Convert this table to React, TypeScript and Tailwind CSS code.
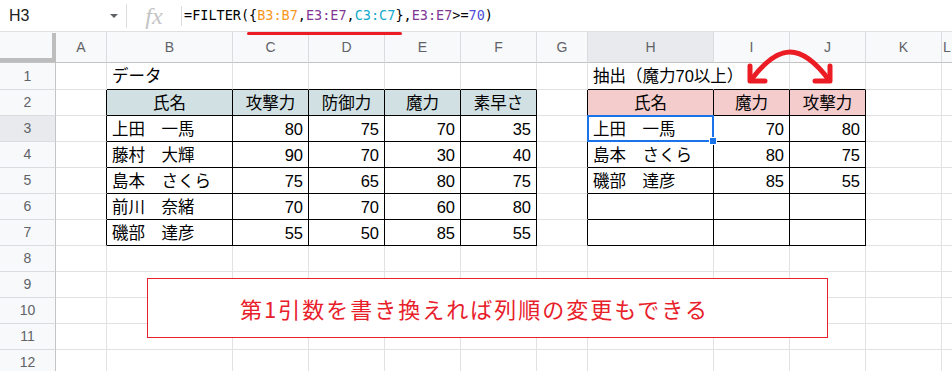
import React from 'react';

const COLS = ['A', 'B', 'C', 'D', 'E', 'F', 'G', 'H', 'I', 'J', 'K', 'L'];

type Cell = { t: string | number; a: 'l' | 'r' | 'c'; bg?: 'blue' | 'pink' };

const t1Head = ['氏名', '攻撃力', '防御力', '魔力', '素早さ'];
const t1: (string | number)[][] = [
  ['上田　一馬', 80, 75, 70, 35],
  ['藤村　大輝', 90, 70, 30, 40],
  ['島本　さくら', 75, 65, 80, 75],
  ['前川　奈緒', 70, 70, 60, 80],
  ['磯部　達彦', 55, 50, 85, 55],
];
const t2Head = ['氏名', '魔力', '攻撃力'];
const t2: (string | number)[][] = [
  ['上田　一馬', 70, 80],
  ['島本　さくら', 80, 75],
  ['磯部　達彦', 85, 55],
];

function getCell(r: number, c: number): Cell | null {
  if (r === 1 && c === 1) return { t: 'データ', a: 'l' };
  if (r === 1 && c === 7) return { t: '抽出（魔力70以上）', a: 'l' };
  if (r === 2 && c >= 1 && c <= 5) return { t: t1Head[c - 1], a: 'c', bg: 'blue' };
  if (r === 2 && c >= 7 && c <= 9) return { t: t2Head[c - 7], a: 'c', bg: 'pink' };
  if (r >= 3 && r <= 7 && c >= 1 && c <= 5) {
    const v = t1[r - 3][c - 1];
    return { t: v, a: c === 1 ? 'l' : 'r' };
  }
  if (r >= 3 && r <= 5 && c >= 7 && c <= 9) {
    const v = t2[r - 3][c - 7];
    return { t: v, a: c === 7 ? 'l' : 'r' };
  }
  return null;
}

function FormulaBar() {
  return (
    <div className="flex items-center h-[32px] border-b border-[#e0e0e0] bg-white">
      <div className="w-[126px] flex items-center pl-[9px] pr-[8px] justify-between">
        <span className="text-[16px] text-[#202124]">H3</span>
        <span className="w-0 h-0 border-l-[4px] border-r-[4px] border-t-[4px] border-l-transparent border-r-transparent border-t-[#5f6368]" />
      </div>
      <div className="w-px h-[24px] bg-[#dadce0]" />
      <div className="w-[54px] flex items-center justify-center">
        <span className="font-['Liberation_Serif',serif] italic text-[24px] text-[#c4c4c4] leading-none">fx</span>
      </div>
      <div className="w-px h-[20px] bg-[#dadce0]" />
      <div className="pl-[2px] font-['DejaVu_Sans_Mono',monospace] text-[13.5px] text-black whitespace-nowrap">
        =FILTER({'{'}
        <span className="text-[#f7981d]">B3:B7</span>,
        <span className="text-[#7e3794]">E3:E7</span>,
        <span className="text-[#11a9cc]">C3:C7</span>
        {'}'},<span className="text-[#7e3794]">E3:E7</span>&gt;=<span className="text-[#4d4dd6]">70</span>)
      </div>
    </div>
  );
}

function Sheet() {
  const rows = Array.from({ length: 12 }, (_, i) => i + 1);
  return (
    <div className="grid grid-cols-[56px_51px_126px_76px_76px_76px_76px_51px_126px_76px_76px_76px_1fr] grid-rows-[31px_27px_repeat(11,26px)]">
      {/* corner */}
      <div className="relative bg-[#f8f9fa] border-b border-[#c4c4c4]">
        <div className="absolute right-0 top-[1px] bottom-0 w-[4px] bg-[#bdbdbd]" />
        <div className="absolute left-0 right-0 bottom-0 h-[4px] bg-[#bdbdbd]" />
      </div>
      {COLS.map((l, i) => (
        <div
          key={l}
          className={
            'flex items-center justify-center border-b border-r border-b-[#c4c4c4] border-r-[#dadce0] text-[14px] text-[#5f6368] ' +
            (i === 7 ? 'bg-[#e8eaed]' : 'bg-[#f8f9fa]')
          }
        >
          {l}
        </div>
      ))}
      {rows.map((r) => (
        <React.Fragment key={r}>
          <div
            className={
              'flex items-center justify-center border-r border-b border-r-[#c4c4c4] border-b-[#dadce0] text-[14px] text-[#5f6368] ' +
              (r === 3 ? 'bg-[#e8eaed]' : 'bg-[#f8f9fa]')
            }
          >
            {r}
          </div>
          {COLS.map((_, c) => {
            const cell = getCell(r, c);
            const inT1 = r >= 2 && r <= 7 && c >= 1 && c <= 5;
            const inT2 = r >= 2 && r <= 7 && c >= 7 && c <= 9;
            const rightBlack = inT1 || inT2 || (r >= 2 && r <= 7 && (c === 0 || c === 6));
            const bottomBlack = inT1 || inT2 || (r === 1 && ((c >= 1 && c <= 5) || (c >= 7 && c <= 9)));
            const hideRight = r === 1 && c === 7;
            let cls = 'relative flex items-center px-[5px] whitespace-nowrap border-r border-b ';
            cls += hideRight ? 'border-r-white ' : rightBlack ? 'border-r-black ' : 'border-r-[#e2e2e2] ';
            cls += bottomBlack ? 'border-b-black ' : 'border-b-[#e2e2e2] ';
            if (cell?.bg === 'blue') cls += 'bg-[#d0e0e3] ';
            if (cell?.bg === 'pink') cls += 'bg-[#f4cccc] ';
            if (cell?.a === 'r') cls += 'justify-end ';
            if (cell?.a === 'c') cls += 'justify-center ';
            if (hideRight) cls += 'overflow-visible z-[1] ';
            const selected = r === 3 && c === 7;
            return (
              <div key={c} className={cls}>
                {cell ? <span className="pt-[1px]">{cell.t}</span> : null}
                {selected ? (
                  <>
                    <div className="absolute -left-px -top-px -right-px -bottom-px border-2 border-[#1a73e8] z-10" />
                    <div className="absolute -right-[4px] -bottom-[4px] w-[8px] h-[8px] bg-[#1a73e8] border border-white z-20" />
                  </>
                ) : null}
              </div>
            );
          })}
        </React.Fragment>
      ))}
    </div>
  );
}

export default function App() {
  return (
    <div className="relative w-[952px] h-[371px] overflow-hidden bg-white text-black text-[16.5px] font-['Liberation_Sans','Noto_Sans_CJK_JP',sans-serif]">
      <FormulaBar />
      <Sheet />

      {/* red underline under the first argument */}
      <div className="absolute left-[247px] top-[32px] w-[155px] h-[3px] rounded-full bg-[#ec1c24] z-30" />

      {/* swap arrow */}
      <svg className="absolute left-[740px] top-[44px] z-30" width="100" height="44" viewBox="0 0 100 44" fill="none">
        <path d="M11 36 Q 32 8 50 8 Q 68 8 89 36" stroke="#ec1c24" strokeWidth="5" strokeLinecap="round" />
        <path d="M10 22 L10 37 L25 37" stroke="#ec1c24" strokeWidth="5" strokeLinecap="round" strokeLinejoin="round" />
        <path d="M90 22 L90 37 L75 37" stroke="#ec1c24" strokeWidth="5" strokeLinecap="round" strokeLinejoin="round" />
      </svg>

      {/* note box */}
      <div className="absolute left-[147px] top-[278px] w-[681px] h-[60px] border border-[#e8202a] bg-white z-30 flex items-center pl-[92px]">
        <span className="font-['Noto_Sans_CJK_JP',sans-serif] text-[22px] tracking-[2px] text-[#e8202a]">
          第1引数を書き換えれば列順の変更もできる
        </span>
      </div>
    </div>
  );
}
